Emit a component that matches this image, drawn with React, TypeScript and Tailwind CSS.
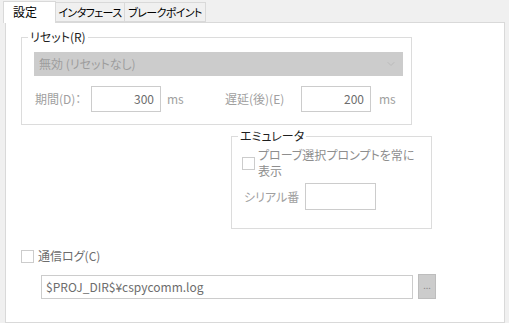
import { ChevronDown } from "lucide-react";

const font = "font-['Meiryo_UI','Noto_Sans_CJK_JP',sans-serif] [font-feature-settings:'palt']";

function Group({
  label,
  className,
  children,
}: {
  label: string;
  className: string;
  children: React.ReactNode;
}) {
  return (
    <div className={`relative border border-[#dcdcdc] ${className}`}>
      <span className="absolute -top-[9px] left-[6px] bg-white px-[2px] text-[12px] leading-[16px] text-[#1e1e1e]">
        {label}
      </span>
      {children}
    </div>
  );
}

function CheckBox() {
  return <span className="inline-block w-[13px] h-[13px] shrink-0 border border-[#cccccc] bg-white" />;
}

export default function App() {
  return (
    <div className={`w-[509px] h-[323px] bg-[#f0f0f0] ${font} text-[12px] leading-[16px] overflow-hidden`}>
      <div className="flex items-end h-[23px] pl-[3px] relative z-10 whitespace-nowrap">
        <div className="h-[22px] w-[53px] bg-white border border-[#d9d9d9] border-b-0 flex items-center pl-[9px] pb-[1px] text-black">
          設定
        </div>
        <div className="h-[20px] mb-[1px] w-[69px] bg-[#f0f0f0] border border-[#d9d9d9] border-l-0 flex items-center justify-center text-[11px] tracking-[-0.6px] text-black">
          インタフェース
        </div>
        <div className="h-[20px] mb-[1px] w-[81px] bg-[#f0f0f0] border border-[#d9d9d9] border-l-0 flex items-center justify-center text-[11px] tracking-[-0.6px] text-black">
          ブレークポイント
        </div>
      </div>

      <div className="ml-[5px] -mt-[1px] w-[500px] h-[301px] bg-white border border-[#d9d9d9] pt-[14px] pl-[15px]">
        <Group label="リセット(R)" className="w-[391px] h-[88px] pt-[14px] pl-[12px]">
          <div className="w-[369px] h-[24px] bg-[#cccccc] flex items-center justify-between pl-[5px] pr-[6px] text-[#9d9d9d]">
            <span>無効 (リセットなし)</span>
            <ChevronDown className="w-[12px] h-[12px] text-[#b4b4b4]" strokeWidth={1.5} />
          </div>
          <div className="flex items-center mt-[10px] h-[26px] text-[#a0a0a0] whitespace-nowrap">
            <span className="w-[57px] pl-[1px]">期間(D)：</span>
            <div className="w-[70px] h-[26px] border border-[#cccccc] flex items-center justify-end pr-[6px] text-[#6d6d6d]">
              300
            </div>
            <span className="ml-[6px] w-[58px]">ms</span>
            <span className="w-[76px]">遅延(後)(E)</span>
            <div className="w-[70px] h-[26px] border border-[#cccccc] flex items-center justify-end pr-[6px] text-[#6d6d6d]">
              200
            </div>
            <span className="ml-[8px]">ms</span>
          </div>
        </Group>

        <Group label="エミュレータ" className="ml-[210px] mt-[11px] w-[201px] h-[93px] pt-[10px] pl-[10px]">
          <div className="flex items-center gap-[3px] text-[#8e8e8e] whitespace-nowrap">
            <CheckBox />
            <span className="leading-[16px]">
              プローブ選択プロンプトを常に
              <br />
              表示
            </span>
          </div>
          <div className="flex items-center mt-[4px] text-[#a0a0a0]">
            <span className="w-[63px] pl-[2px]">シリアル番</span>
            <div className="w-[71px] h-[27px] border border-[#cccccc]" />
          </div>
        </Group>

        <div className="flex items-center gap-[4px] mt-[19px] text-[#6d6d6d]">
          <CheckBox />
          <span>通信ログ(C)</span>
        </div>
        <div className="flex items-center mt-[10px] ml-[20px]">
          <div className="w-[372px] h-[24px] border border-[#cccccc] flex items-center pl-[4px] text-[#6d6d6d]">
            $PROJ_DIR$¥cspycomm.log
          </div>
          <div className="ml-[5px] w-[18px] h-[25px] bg-[#cccccc] border border-[#bdbdbd] flex items-center justify-center pb-[3px] text-[9px] leading-none text-[#8a8a8a]">
            ...
          </div>
        </div>
      </div>
    </div>
  );
}
